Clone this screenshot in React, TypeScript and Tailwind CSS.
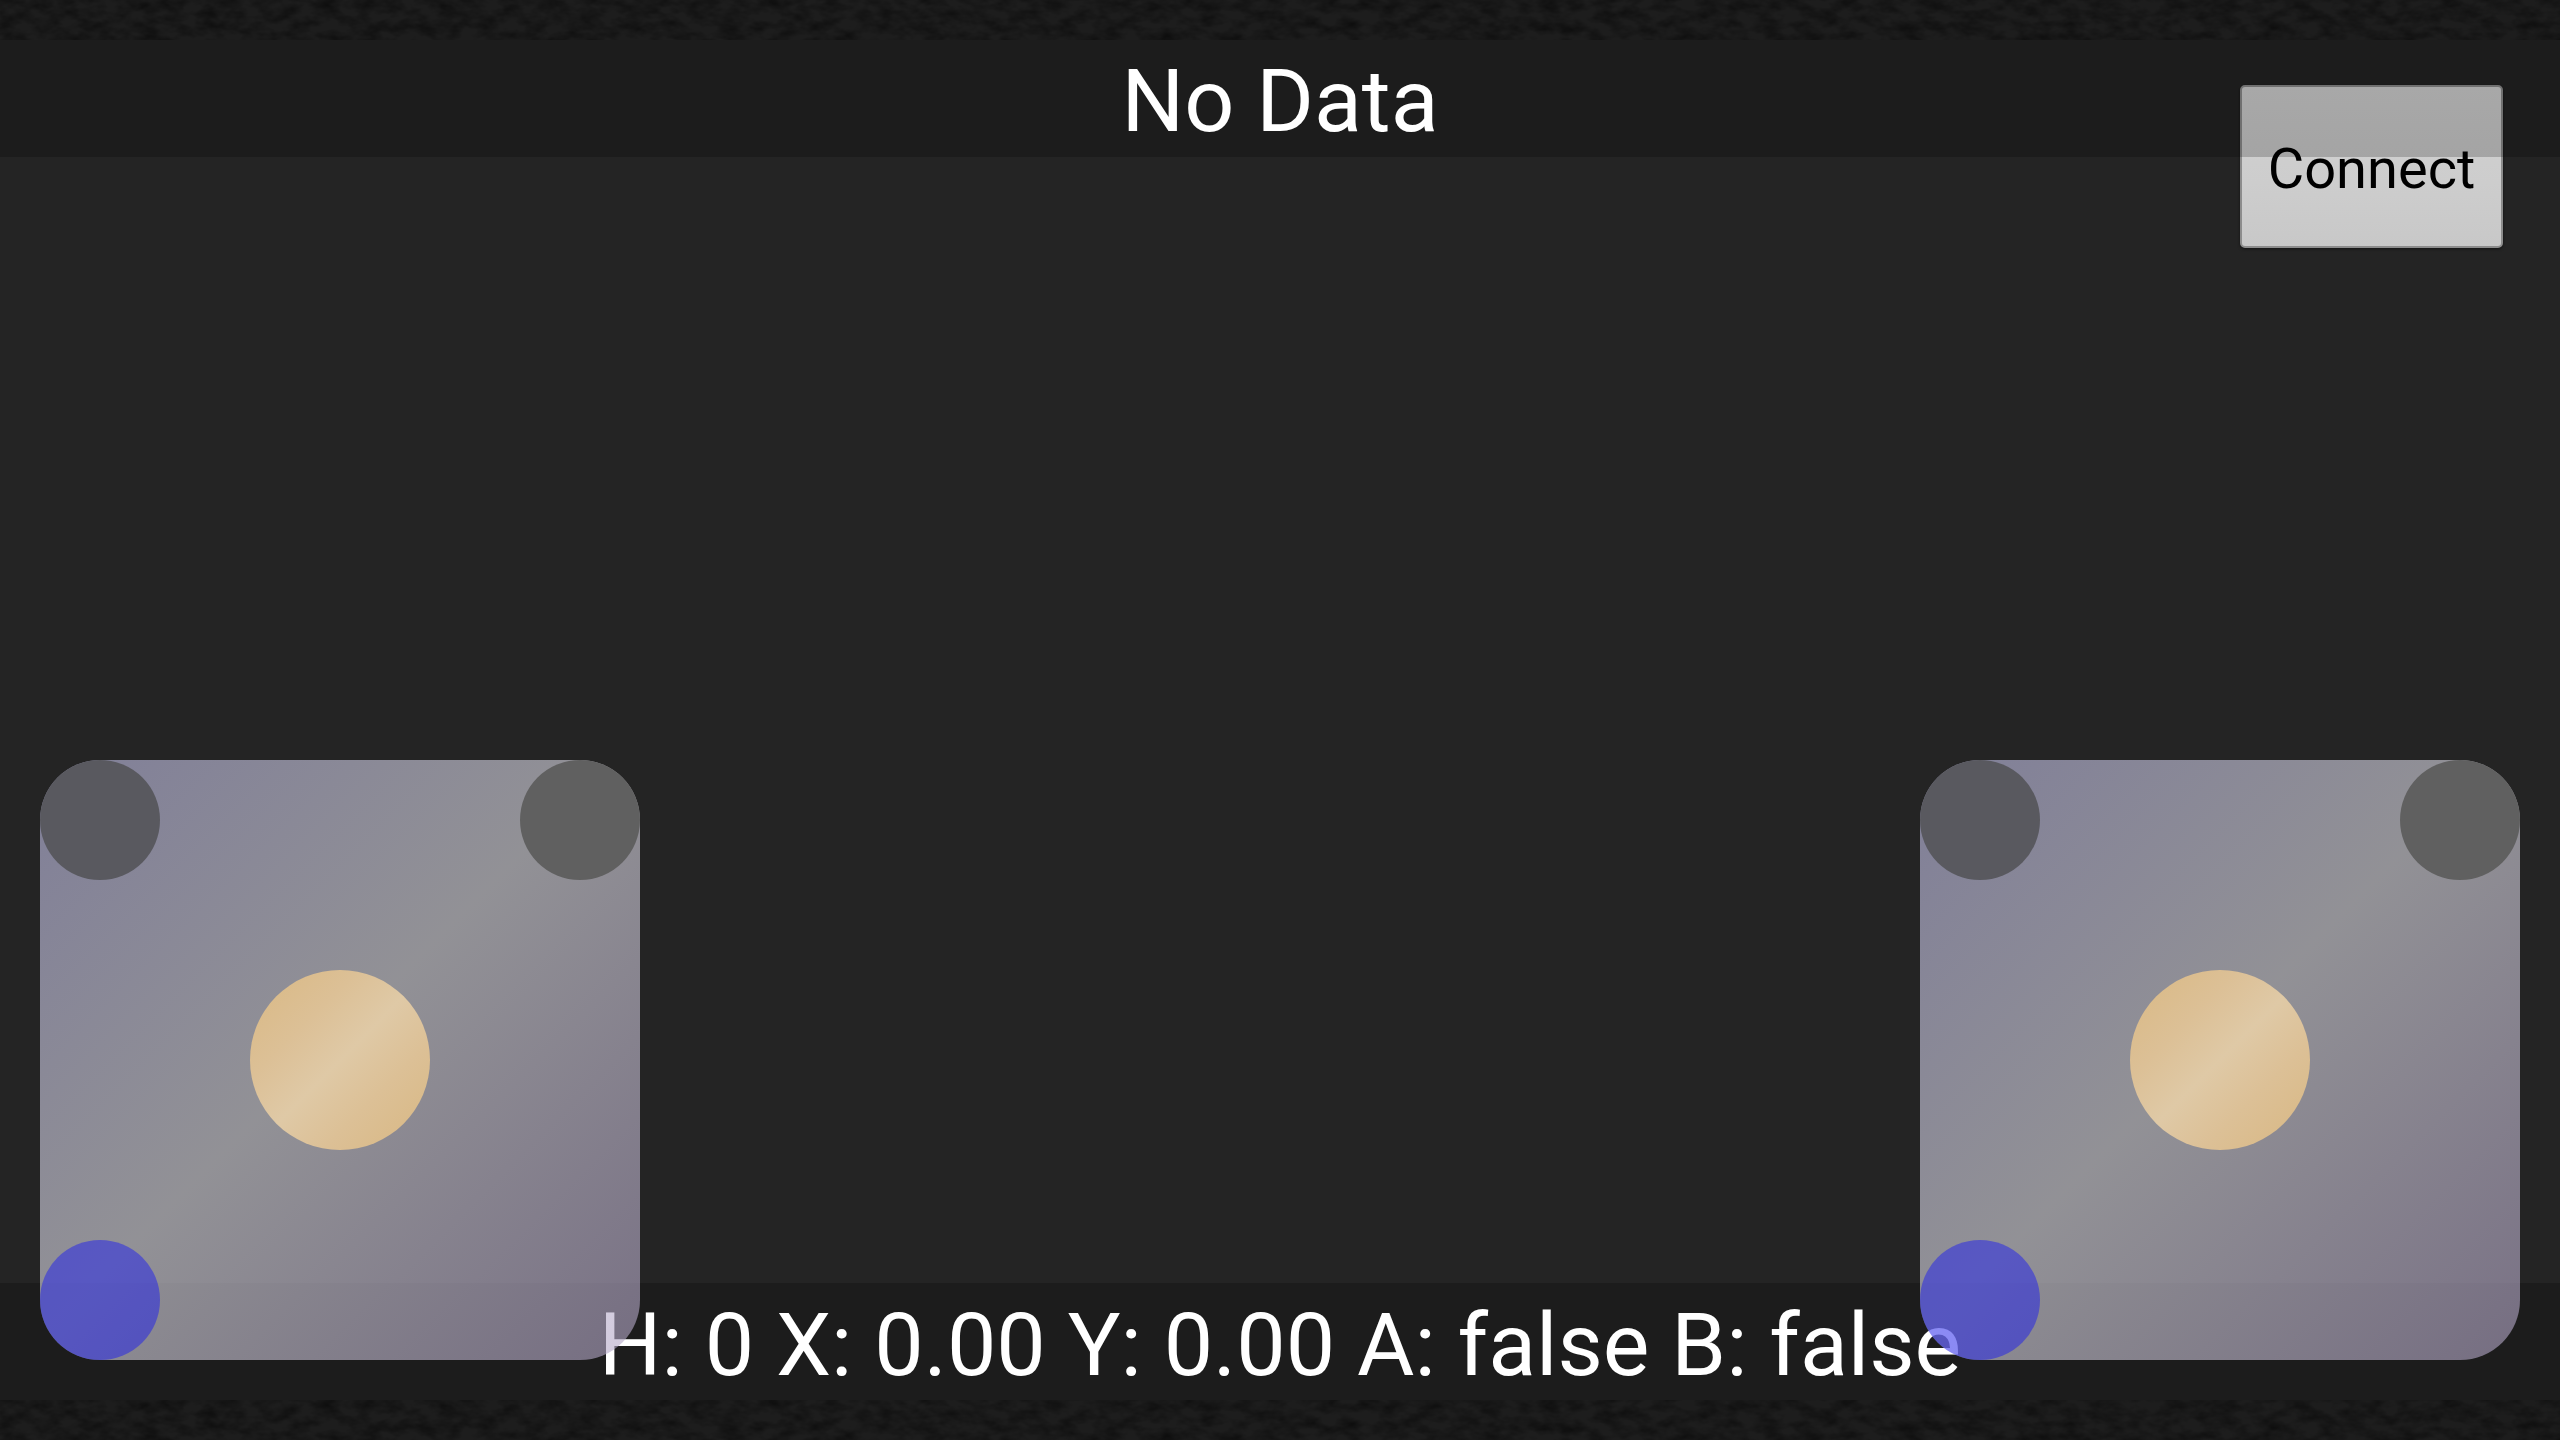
import React from "react";

function Grain({ id }: { id: string }) {
  return (
    <svg className="absolute inset-0 w-full h-full" preserveAspectRatio="none">
      <filter id={id} x="0" y="0" width="100%" height="100%">
        <feTurbulence type="fractalNoise" baseFrequency="0.05 0.09" numOctaves="3" seed="7" />
        <feColorMatrix values="0 0 0 0 0  0 0 0 0 0  0 0 0 0 0  0.9 0 0 0 -0.3" />
      </filter>
      <rect width="100%" height="100%" filter={`url(#${id})`} />
    </svg>
  );
}

function Pad() {
  return (
    <div className="w-[600px] h-[600px] rounded-[60px] flex flex-col justify-between bg-[linear-gradient(135deg,rgba(190,188,230,0.6)_0%,rgba(219,218,226,0.6)_48%,rgba(178,165,198,0.6)_100%)]">
      <div className="flex justify-between">
        <div className="w-[120px] h-[120px] rounded-full bg-[#59595f]" />
        <div className="w-[120px] h-[120px] rounded-full bg-[#606060]" />
      </div>
      <div className="flex justify-center">
        <div className="w-[180px] h-[180px] rounded-full bg-[linear-gradient(135deg,#d9b883_0%,#dcc096_30%,#dfc9a6_50%,#dcc096_70%,#d8b782_100%)]" />
      </div>
      <div className="flex justify-start">
        <div className="w-[120px] h-[120px] rounded-full bg-[rgba(10,10,255,0.42)]" />
      </div>
    </div>
  );
}

export default function App() {
  return (
    <div className="relative w-[2560px] h-[1440px] overflow-hidden bg-[#242424] flex flex-col font-['Roboto',sans-serif]">
      <div className="relative h-[40px] bg-[#1d1d1d] shrink-0">
        <Grain id="grain-top" />
      </div>
      <header className="relative z-10 h-[117px] shrink-0 bg-black/20 flex items-center justify-center text-white text-[88px] leading-none">
        <span className="mt-[4px]">No Data</span>
      </header>
      <main className="flex-1" />
      <footer className="h-[117px] shrink-0 bg-black/20 flex items-center justify-center text-white text-[88px] leading-none">
        <span className="mt-[6px]">H: 0 X: 0.00 Y: 0.00 A: false B: false</span>
      </footer>
      <div className="relative h-[40px] bg-[#1d1d1d] shrink-0">
        <Grain id="grain-bottom" />
      </div>

      <button className="absolute z-0 top-[85px] right-[57px] w-[263px] h-[163px] rounded-[5px] border-2 border-[#8c8c8c] bg-[linear-gradient(180deg,#d2d2d2_0%,#cdcdcd_60%,#c8c8c8_100%)] shadow-[0_1px_3px_rgba(0,0,0,0.5)] flex items-center justify-center text-black text-[56px] leading-none pt-[4px]">
        Connect
      </button>

      <div className="absolute z-20 left-[40px] bottom-[80px]">
        <Pad />
      </div>
      <div className="absolute z-20 right-[40px] bottom-[80px]">
        <Pad />
      </div>
    </div>
  );
}
